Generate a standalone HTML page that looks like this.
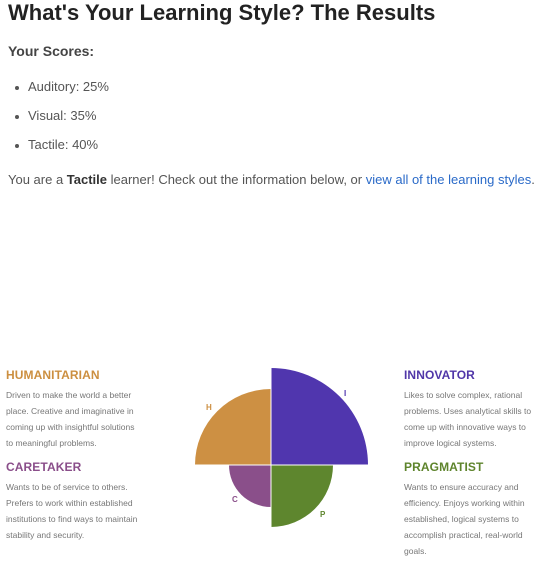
<!DOCTYPE html>
<html><head><meta charset="utf-8"><style>
body{margin:0;width:548px;height:568px;background:#fff;font-family:"Liberation Sans",sans-serif;color:#444;position:relative;overflow:hidden}
.a{position:absolute;white-space:nowrap}
h1{position:absolute;left:8px;top:0px;margin:0;font-size:22px;font-weight:bold;color:#222}
.s{font-size:13px;color:#555}
.hd{position:absolute;font-size:12px;font-weight:bold;letter-spacing:0.1px}
.p{position:absolute;font-size:8.5px;line-height:16px;color:#777;white-space:nowrap}
.dot{position:absolute;width:4px;height:4px;border-radius:50%;background:#555}
</style></head><body>
<h1>What's Your Learning Style? The Results</h1>
<div class="a" style="left:8px;top:43px;font-size:14px;font-weight:bold;color:#444">Your Scores:</div>
<div class="dot" style="left:15px;top:86px"></div><div class="a s" style="left:28px;top:79px">Auditory: 25%</div>
<div class="dot" style="left:15px;top:115px"></div><div class="a s" style="left:28px;top:108px">Visual: 35%</div>
<div class="dot" style="left:15px;top:144px"></div><div class="a s" style="left:28px;top:137px">Tactile: 40%</div>
<div class="a s" style="left:8px;top:172px;font-size:13px">You are a <b style="color:#333">Tactile</b> learner! Check out the information below, or <span style="color:#2a6ac8">view all of the learning styles</span>.</div>

<div class="hd" style="left:6px;top:368px;color:#cc8f40">HUMANITARIAN</div>
<div class="p" style="left:6px;top:387px">Driven to make the world a better<br>place. Creative and imaginative in<br>coming up with insightful solutions<br>to meaningful problems.</div>
<div class="hd" style="left:6px;top:460px;color:#8a4e8a">CARETAKER</div>
<div class="p" style="left:6px;top:479px">Wants to be of service to others.<br>Prefers to work within established<br>institutions to find ways to maintain<br>stability and security.</div>
<div class="hd" style="left:404px;top:368px;color:#5036a8">INNOVATOR</div>
<div class="p" style="left:404px;top:387px">Likes to solve complex, rational<br>problems. Uses analytical skills to<br>come up with innovative ways to<br>improve logical systems.</div>
<div class="hd" style="left:404px;top:460px;color:#5e842c">PRAGMATIST</div>
<div class="p" style="left:404px;top:479px">Wants to ensure accuracy and<br>efficiency. Enjoys working within<br>established, logical systems to<br>accomplish practical, real-world<br>goals.</div>

<svg class="a" style="left:0;top:0" width="548" height="568">
<path d="M271 465 V368 A97 97 0 0 1 368 465 Z" fill="#5036ae"/>
<path d="M271 465 H195 A76 76 0 0 1 271 389 Z" fill="#cd9043"/>
<path d="M271 465 V507 A42 42 0 0 1 229 465 Z" fill="#8a4f8a"/>
<path d="M271 465 H333 A62 62 0 0 1 271 527 Z" fill="#5e862e"/>
<line x1="271" y1="366" x2="271" y2="528" stroke="#fff" stroke-width="1"/>
<line x1="194" y1="465" x2="369" y2="465" stroke="#fff" stroke-width="1"/>
<g font-family="Liberation Sans" font-size="8" font-weight="bold">
<text x="344" y="396" fill="#5036ae">I</text>
<text x="206" y="410" fill="#cd9043">H</text>
<text x="232" y="502" fill="#8a4f8a">C</text>
<text x="320" y="517" fill="#5e862e">P</text>
</g>
</svg>
</body></html>
